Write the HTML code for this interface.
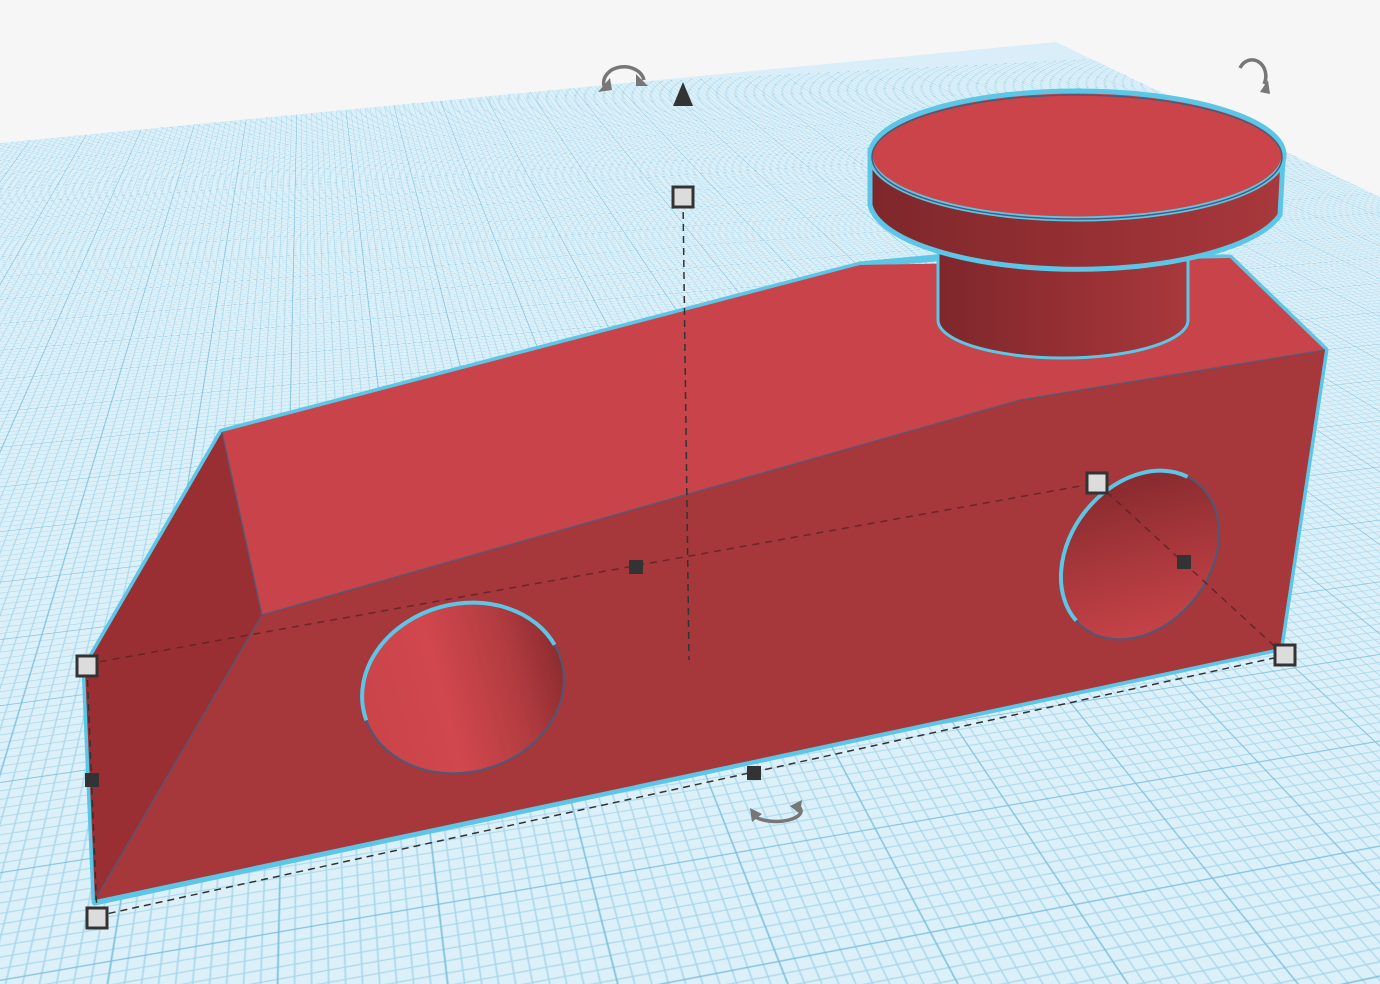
<!DOCTYPE html>
<html><head><meta charset="utf-8"><style>
html,body{margin:0;padding:0;width:1380px;height:984px;overflow:hidden;background:#f6f6f6;}
#wrap{position:relative;width:1380px;height:984px;overflow:hidden;}
#plane{position:absolute;left:0;top:0;width:1380px;height:984px;clip-path:polygon(0 143px,1056px 42px,1380px 197px,1380px 984px,0 984px);overflow:hidden;background:#d9eef8;}
#grid{position:absolute;left:-1300px;top:-1500px;width:4000px;height:4000px;
background-color:#dcf0f9;
background-image:
linear-gradient(#79bddb 1.5px,transparent 1.5px),
linear-gradient(90deg,#79bddb 1.5px,transparent 1.5px),
linear-gradient(#a9d7eb 1px,transparent 1px),
linear-gradient(90deg,#a9d7eb 1px,transparent 1px);
background-size:100px 100px,100px 100px,10px 10px,10px 10px;
transform:perspective(1400px) rotateX(62deg) rotateZ(-14deg);
transform-origin:50% 50%;}
svg{position:absolute;left:0;top:0;}
</style></head><body><div id="wrap">
<div id="plane"><div id="grid"></div></div>
<svg width="1380" height="984" viewBox="0 0 1380 984">
<defs>
<linearGradient id="h1" x1="0" y1="0" x2="1" y2="0">
<stop offset="0" stop-color="#c9444a"/><stop offset="0.4" stop-color="#d1474d"/><stop offset="0.75" stop-color="#b23c40"/><stop offset="1" stop-color="#8e2c30"/></linearGradient>
<linearGradient id="h2" x1="0" y1="1" x2="1" y2="0">
<stop offset="0" stop-color="#d1474d"/><stop offset="0.5" stop-color="#a7373b"/><stop offset="1" stop-color="#7a2529"/></linearGradient>
<linearGradient id="cyl" x1="0" y1="0" x2="1" y2="0">
<stop offset="0" stop-color="#7e272b"/><stop offset="0.5" stop-color="#942f33"/><stop offset="1" stop-color="#a8383c"/></linearGradient>
</defs>
<polygon points="222,432 860,265 935,258 1230,258 1325,350 1280,648 95,902 85,668" fill="none" stroke="#5cc6e6" stroke-width="7" stroke-linejoin="round"/>
<polygon points="222,432 860,265 1230,258 1325,350 1020,400 262,615" fill="#c8444a"/>
<polygon points="222,432 262,615 95,900 85,668" fill="#9a2f33"/>
<polygon points="262,615 1020,400 1325,350 1280,648 95,900" fill="#a6373b"/>
<g fill="none" stroke="#4a5a78" stroke-width="1.5" opacity="0.8">
<polyline points="222,432 262,615 95,900"/>
<polyline points="262,615 1020,400 1325,350"/>
</g>
<ellipse cx="463" cy="688" rx="102" ry="84" transform="rotate(-15 463 688)" fill="url(#h1)" stroke="#4a5a78" stroke-width="2"/>
<ellipse cx="463" cy="688" rx="102" ry="84" transform="rotate(-15 463 688)" pathLength="100" fill="none" stroke="#5cc6e6" stroke-width="4" stroke-dasharray="0 49 48 100"/>
<ellipse cx="1140" cy="555" rx="92" ry="70" transform="rotate(-52 1140 555)" fill="url(#h2)" stroke="#4a5a78" stroke-width="2"/>
<ellipse cx="1140" cy="555" rx="92" ry="70" transform="rotate(-52 1140 555)" pathLength="100" fill="none" stroke="#5cc6e6" stroke-width="4" stroke-dasharray="0 52 46 100"/>
<path d="M938,240 L938,320 A125,38 0 0 0 1188,320 L1188,240 Z" fill="url(#cyl)" stroke="#5cc6e6" stroke-width="3"/>
<path d="M870,150 L870,205 A208,70 0 0 0 1280,215 L1283,160 Z" fill="url(#cyl)" stroke="#5cc6e6" stroke-width="5"/>
<ellipse cx="1077" cy="155" rx="207" ry="64" fill="#cb444a" stroke="#5cc6e6" stroke-width="5"/>
<ellipse cx="1077" cy="157" rx="205" ry="62" fill="none" stroke="#4a5a78" stroke-width="1.5"/>
<g fill="none" stroke="#333" stroke-width="1.5" stroke-dasharray="7,5">
<line x1="683" y1="200" x2="689" y2="660"/>
<line x1="97" y1="916" x2="1283" y2="656"/>
<line x1="87" y1="668" x2="97" y2="916"/>
</g>
<g fill="none" stroke="#5a2224" stroke-width="1.5" stroke-dasharray="7,6" opacity="0.8">
<line x1="87" y1="664" x2="1097" y2="483"/>
<line x1="1097" y1="483" x2="1283" y2="654"/>
</g>
<g fill="#dcdcdc" stroke="#333" stroke-width="3">
<rect x="673" y="187" width="20" height="20"/>
<rect x="77" y="656" width="20" height="20"/>
<rect x="87" y="908" width="20" height="20"/>
<rect x="1275" y="645" width="20" height="20"/>
<rect x="1087" y="473" width="20" height="20"/>
</g>
<g fill="#333">
<rect x="629" y="560" width="14" height="14"/>
<rect x="85" y="773" width="14" height="14"/>
<rect x="747" y="766" width="14" height="14"/>
<rect x="1177" y="555" width="14" height="14"/>
<path d="M683,82 L693,106 L673,106 Z"/>
</g>
<g fill="none" stroke="#777" stroke-width="3.5">
<path d="M604,86 A20,16 0 0 1 644,80"/>
<path d="M1240,68 A12,14 0 0 1 1264,84"/>
<path d="M754,816 A24,10 0 0 0 798,806"/>
</g>
<g fill="#777">
<path d="M598,92 L610,78 L612,90 Z"/>
<path d="M648,86 L636,74 L636,86 Z"/>
<path d="M1260,92 L1268,80 L1270,94 Z"/>
<path d="M750,808 L762,814 L752,822 Z"/>
<path d="M802,800 L790,806 L800,814 Z"/>
</g>
</svg>
</div></body></html>
